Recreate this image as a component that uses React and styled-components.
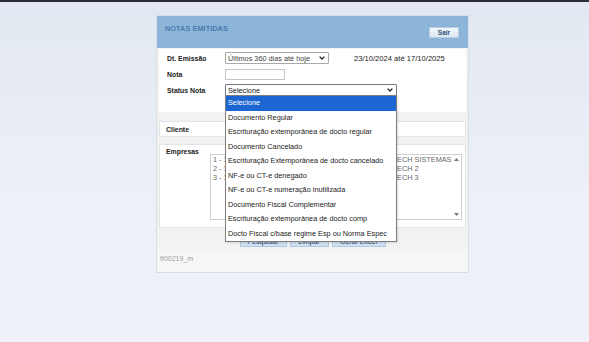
import React from "react";
import styled, { createGlobalStyle } from "styled-components";

const GlobalStyle = createGlobalStyle`
  html, body {
    margin: 0;
    height: 100%;
  }
  body {
    background: linear-gradient(#e2e8f1, #edf0f7 60%, #eef1f7);
    border-top: 2px solid #2b2e3a;
    box-sizing: border-box;
    font-family: "Liberation Sans", Arial, sans-serif;
  }
`;

const Page = styled.div`
  padding: 13px 0 0 156px;
`;

const Panel = styled.div`
  width: 313px;
  height: 258px;
  box-sizing: border-box;
  border: 1px solid #d8dee7;
  background: #f2f2f2;
  display: flex;
  flex-direction: column;
`;

const Header = styled.div`
  height: 32px;
  background: #8db5d9;
  display: flex;
  justify-content: space-between;
  align-items: center;
  padding: 0 9px 0 8px;
`;

const Title = styled.div`
  align-self: flex-start;
  margin-top: 8px;
  font-size: 7.25px;
  font-weight: bold;
  color: #4b79b0;
  letter-spacing: 0.1px;
`;

const SmallButton = styled.button`
  width: 30px;
  height: 11px;
  padding: 0;
  border: 1px solid #b9cde3;
  background: linear-gradient(#f2f7fc, #dce8f4);
  font-family: inherit;
  font-size: 6.5px;
  font-weight: bold;
  color: #2f4d73;
`;

const Box = styled.div`
  margin: ${(p) => p.$top || 0}px 2px 0;
  background: #fff;
  border: 1px solid ${(p) => (p.$plain ? "#fff" : "#e2e4e7")};
  box-sizing: border-box;
  height: ${(p) => p.$h}px;
  position: relative;
`;

const FormRows = styled.div`
  padding-left: 7px;
`;

const Row = styled.div`
  height: 16px;
  display: flex;
  align-items: center;
  position: relative;
`;

const Label = styled.div`
  width: 58px;
  flex-shrink: 0;
  font-size: 6.9px;
  font-weight: bold;
  color: #222;
`;

const SelectBox = styled.div`
  position: relative;
  width: ${(p) => p.$w}px;
  height: 12px;
  box-sizing: border-box;
  border: 1px solid ${(p) => (p.$focus ? "#6f7a86" : "#a9a9a9")};
  border-radius: 1px;
  background: #fff;
  display: flex;
  align-items: center;
  justify-content: space-between;
  padding: 0 3px 0 2px;
  font-size: 7.3px;
  color: ${(p) => (p.$focus ? "#111" : "#444")};
`;

const TextInput = styled.div`
  width: 60px;
  height: 11px;
  box-sizing: border-box;
  border: 1px solid #c4c4c4;
  background: #fff;
`;

const DateText = styled.div`
  margin-left: 25px;
  font-size: 7.6px;
  color: #222;
`;

const DropList = styled.ul`
  position: absolute;
  top: 100%;
  left: -1px;
  width: 172px;
  margin: 0;
  padding: 0;
  list-style: none;
  background: #fff;
  border: 1px solid #7d7d7d;
  box-sizing: border-box;
  z-index: 10;
  box-shadow: 1px 1px 2px rgba(0, 0, 0, 0.12);
`;

const DropItem = styled.li`
  height: 14.5px;
  line-height: 14.5px;
  padding-left: 2px;
  font-size: 7.3px;
  white-space: nowrap;
  color: ${(p) => (p.$active ? "#fff" : "#222")};
  background: ${(p) => (p.$active ? "#1b66d2" : "transparent")};
`;

const BoxLabel = styled.div`
  font-size: 6.9px;
  font-weight: bold;
  color: #222;
  width: 44px;
  flex-shrink: 0;
`;

const ClienteInner = styled.div`
  height: 100%;
  display: flex;
  align-items: center;
  padding-left: 6px;
`;

const EmpresasInner = styled.div`
  display: flex;
  padding: 3px 3px 0 6px;
`;

const ListBox = styled.div`
  margin-top: 6px;
  width: 254px;
  height: 66px;
  box-sizing: border-box;
  border: 1px solid #cfcfcf;
  background: #fff;
  display: flex;
  overflow: hidden;
`;

const ListItems = styled.div`
  flex: 1;
  padding: 0 0 0 2px;
  font-size: 7.3px;
  line-height: 9.2px;
  color: #666;
  white-space: nowrap;
  overflow: hidden;
`;

const ScrollBar = styled.div`
  width: 9px;
  display: flex;
  flex-direction: column;
  justify-content: space-between;
  align-items: center;
  padding: 3px 0 3px;
`;

const ButtonRow = styled.div`
  height: 22px;
  display: flex;
  justify-content: center;
  gap: 3px;
  padding-top: 7px;
  box-sizing: border-box;
`;

const ActionButton = styled.button`
  width: ${(p) => p.$w}px;
  height: 12px;
  padding: 0;
  border: 1px solid #b3c9e0;
  background: #cfe0f2;
  font-family: inherit;
  font-size: 7px;
  color: #2b3f5c;
`;

const Footer = styled.div`
  flex: 1;
  background: #f6f6f6;
  padding: 5px 0 0 3px;
  font-size: 7px;
  color: #a0a0a0;
`;

const Chevron = () => (
  <svg width="6" height="4" viewBox="0 0 6 4">
    <path d="M0.6 0.6 L3 3 L5.4 0.6" fill="none" stroke="#222" strokeWidth="1.3" />
  </svg>
);

const Arrow = ({ down }) => (
  <svg width="5" height="3" viewBox="0 0 5 3">
    <path d={down ? "M0 0 L5 0 L2.5 3 Z" : "M0 3 L5 3 L2.5 0 Z"} fill="#7a7a7a" />
  </svg>
);

const statusOptions = [
  "Selecione",
  "Documento Regular",
  "Escrituração extemporânea de docto regular",
  "Documento Cancelado",
  "Escrituração Extemporânea de docto cancelado",
  "NF-e ou CT-e denegado",
  "NF-e ou CT-e numeração inutilizada",
  "Documento Fiscal Complementar",
  "Escrituração extemporânea de docto comp",
  "Docto Fiscal c/base regime Esp ou Norma Espec",
];

const empresas = [
  "1 - 12.345.678/0001-90 - EMPRESA MODELO E SOFTTECH SISTEMAS",
  "2 - 12.345.678/0002-71 - EMPRESA MODELO E SOFTTECH 2",
  "3 - 12.345.678/0003-52 - EMPRESA MODELO E SOFTTECH 3",
];

const App = () => {
  return (
    <Page>
      <GlobalStyle />
      <Panel>
        <Header>
          <Title>NOTAS EMITIDAS</Title>
          <SmallButton>Sair</SmallButton>
        </Header>

        <Box $top={1} $h={63} $plain>
          <FormRows>
            <Row>
              <Label>Dt. Emissão</Label>
              <SelectBox $w={104}>
                <span>Últimos 360 dias até hoje</span>
                <Chevron />
              </SelectBox>
              <DateText>23/10/2024 até 17/10/2025</DateText>
            </Row>
            <Row>
              <Label>Nota</Label>
              <TextInput />
            </Row>
            <Row>
              <Label>Status Nota</Label>
              <SelectBox $w={172} $focus>
                <span>Selecione</span>
                <Chevron />
                <DropList>
                  {statusOptions.map((o, i) => (
                    <DropItem key={o} $active={i === 0}>
                      {o}
                    </DropItem>
                  ))}
                </DropList>
              </SelectBox>
            </Row>
          </FormRows>
        </Box>

        <Box $top={9} $h={16}>
          <ClienteInner>
            <BoxLabel>Cliente</BoxLabel>
          </ClienteInner>
        </Box>

        <Box $top={7} $h={84}>
          <EmpresasInner>
            <BoxLabel>Empresas</BoxLabel>
            <ListBox>
              <ListItems>
                {empresas.map((e) => (
                  <div key={e}>{e}</div>
                ))}
              </ListItems>
              <ScrollBar>
                <Arrow />
                <Arrow down />
              </ScrollBar>
            </ListBox>
          </EmpresasInner>
        </Box>

        <ButtonRow>
          <ActionButton $w={47}>Pesquisar</ActionButton>
          <ActionButton $w={39}>Limpar</ActionButton>
          <ActionButton $w={54}>Gerar Excel</ActionButton>
        </ButtonRow>

        <Footer>ft00219_m</Footer>
      </Panel>
    </Page>
  );
};

export default App;
